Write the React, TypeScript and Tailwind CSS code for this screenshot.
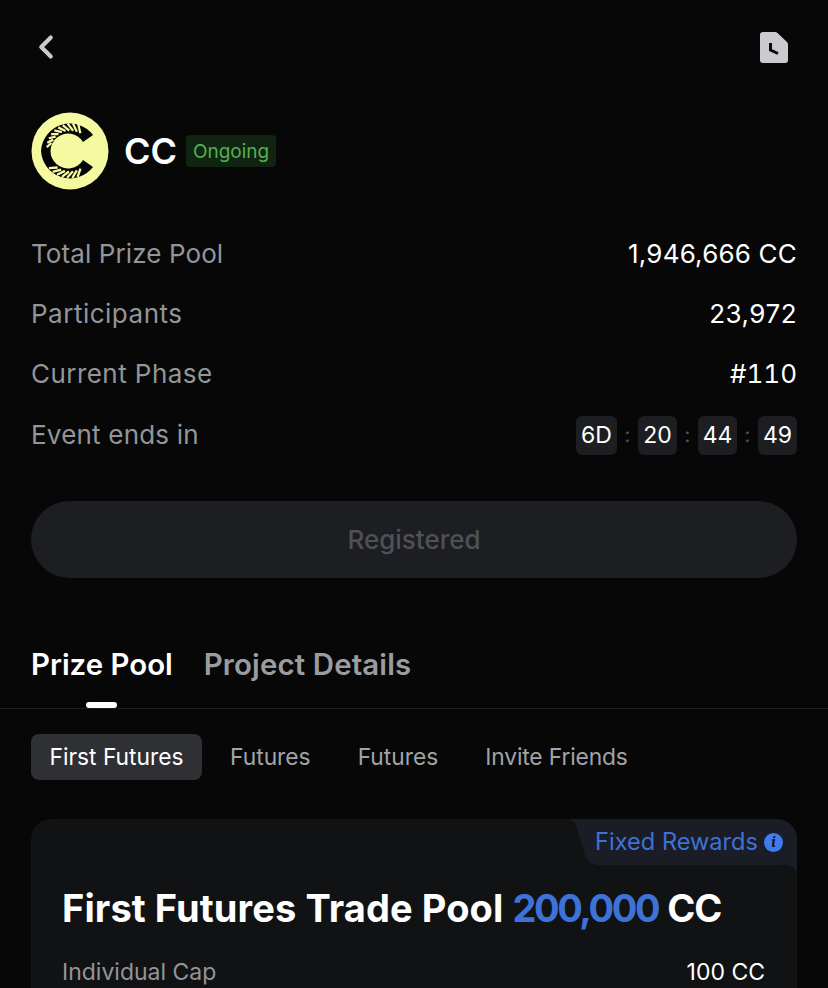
import { ChevronLeft } from 'lucide-react';

const stats = [
  { label: 'Total Prize Pool', value: '1,946,666 CC', track: 'tracking-[0.1px]', valueClass: 'tracking-[0.2px]' },
  { label: 'Participants', value: '23,972', track: 'tracking-[0.5px]', valueClass: 'tracking-[0.5px]' },
  { label: 'Current Phase', value: '#110', track: 'tracking-[0.45px]', valueClass: 'tabular-nums' },
];

const topAngles = [202, 213, 224, 235, 246, 257, 268, 279, 290, 301];
const bottomAngles = [60, 71, 82, 93, 104, 115, 126];

// stripes on the C are short skewed spokes, bent a little along the arc
function stripe(a: number, skew: number, r1: number, r2: number) {
  const rad = (d: number) => (d * Math.PI) / 180;
  return {
    x1: 39 + r1 * Math.cos(rad(a)),
    y1: 38.5 + r1 * Math.sin(rad(a)),
    x2: 39 + r2 * Math.cos(rad(a + skew)),
    y2: 38.5 + r2 * Math.sin(rad(a + skew)),
  };
}

function CcLogo() {
  return (
    <svg width="78" height="78" viewBox="0 0 78 78" className="shrink-0">
      <circle cx="39" cy="39" r="38.5" fill="#f5f9a0" />
      <path
        d="M62 23 A 29 29 0 0 0 10 38.5 A 29 29 0 0 0 62 55 L 52 48 A 17.5 17.5 0 1 1 52 30 Z"
        fill="#050505"
      />
      {topAngles.map((a) => (
        <line
          key={a}
          {...stripe(a, -14, 20, 23.5 + ((a - 202) / 100) * 4.5)}
          stroke="#f5f9a0"
          strokeWidth="2.3"
        />
      ))}
      {bottomAngles.map((a) => (
        <line key={a} {...stripe(a, 14, 21, 27.5)} stroke="#f5f9a0" strokeWidth="2.3" />
      ))}
    </svg>
  );
}

function HistoryIcon() {
  return (
    <svg width="28" height="31" viewBox="0 0 28 31">
      <path
        d="M3 0 H15 Q16.5 0 17.5 1 L27 10 Q28 11 28 12.5 V28 A3 3 0 0 1 25 31 H3 A3 3 0 0 1 0 28 V3 A3 3 0 0 1 3 0 Z"
        fill="#c9cbcf"
      />
      <path d="M10.5 11 V18 L18 21.5" fill="none" stroke="#0a0a0c" strokeWidth="3" />
    </svg>
  );
}

function TimeBox({ children, wide }: { children: string; wide?: boolean }) {
  return (
    <div
      className={`flex h-[39px] items-center justify-center rounded-md bg-[#1c1e22] text-[23px] tracking-normal text-white ${
        wide ? 'w-[41px]' : 'w-[39px]'
      }`}
    >
      {children}
    </div>
  );
}

function Colon() {
  return <span className="w-[21px] text-center text-[20px] text-[#55585d]">:</span>;
}

export default function App() {
  return (
    <div
      className="h-[988px] w-[828px] overflow-hidden bg-[#070708] text-white"
      style={{ fontFamily: 'Inter, "Liberation Sans", sans-serif' }}
    >
      <header className="flex h-[94px] items-center justify-between pl-[27px] pr-[40px]">
        <ChevronLeft size={38} strokeWidth={2.6} color="#c9cbcf" className="-mt-[1px]" />
        <HistoryIcon />
      </header>

      <div className="mt-[18px] flex items-center px-[31px]">
        <CcLogo />
        <h1 className="ml-[15px] text-[36px] font-semibold leading-none">CC</h1>
        <span className="ml-[9px] -mt-[1px] flex h-[32px] w-[90px] items-center justify-center rounded bg-[#112311] pt-[4px] text-[19px] text-[#52b14f]">
          Ongoing
        </span>
      </div>

      <div className="mt-[33px] px-[31px]">
        {stats.map((s) => (
          <div key={s.label} className="flex h-[60px] items-center justify-between text-[26px]">
            <span className={`text-[#939599] ${s.track}`}>{s.label}</span>
            <span className={`text-white ${s.valueClass}`}>{s.value}</span>
          </div>
        ))}
        <div className="mt-[1px] flex h-[60px] items-center justify-between text-[26px]">
          <span className="tracking-[0.2px] text-[#939599]">Event ends in</span>
          <div className="flex items-center pt-[2px]">
            <TimeBox wide>6D</TimeBox>
            <Colon />
            <TimeBox>20</TimeBox>
            <Colon />
            <TimeBox>44</TimeBox>
            <Colon />
            <TimeBox>49</TimeBox>
          </div>
        </div>
      </div>

      <div className="mx-[31px] mt-[37px] flex h-[77px] items-center justify-center rounded-full bg-[#1c1e22] text-[26px] font-medium text-[#4e5156]">
        Registered
      </div>

      <div className="relative mt-[66px] flex h-[65px] gap-[31px] border-b border-[#1c1e22] px-[31px] text-[29.4px] font-semibold leading-[41px]">
        <div className="relative">
          <span className="text-white">Prize Pool</span>
          <div className="absolute bottom-0 left-[55px] h-[6px] w-[31px] rounded-sm bg-white" />
        </div>
        <span className="tracking-[0.15px] text-[#9a9ca0]">Project Details</span>
      </div>

      <div className="mt-[25px] flex items-center px-[31px] text-[22.8px] text-[#a1a3a7]">
        <div className="flex h-[46px] w-[171px] items-center justify-center rounded-lg bg-[#2e3034] text-white">
          First Futures
        </div>
        <span className="ml-[28px]">Futures</span>
        <span className="ml-[47px]">Futures</span>
        <span className="ml-[47px] tracking-[-0.15px]">Invite Friends</span>
      </div>

      <section className="relative mx-[31px] mt-[39px] h-[300px] rounded-t-[20px] bg-[#111214] px-[32px]">
        <div className="absolute right-0 top-0 flex h-[46px] w-[228px] items-center justify-end pr-[14px]">
          <svg width="228" height="56" viewBox="0 0 228 56" className="absolute right-0 top-0">
            <path
              d="M0 0 H208 A20 20 0 0 1 228 20 V56 A12 10 0 0 0 214 46 H28 A14 14 0 0 1 16 36 L8 10 A12 12 0 0 0 0 0 Z"
              fill="#1a1c26"
            />
          </svg>
          <span className="relative text-[23.6px] text-[#3e72d8]">Fixed Rewards</span>
          <span className="relative ml-[6px] flex h-[19px] w-[19px] items-center justify-center rounded-full bg-[#3f7bf0] font-serif text-[15px] font-bold italic text-[#111214]">
            i
          </span>
        </div>

        <h2 className="-ml-[1px] pt-[65px] text-[38px] font-bold leading-[48px]">
          <span className="tracking-[0.1px]">First Futures Trade Pool</span>{' '}
          <span className="tracking-[-2.4px] text-[#3e72d8]">200,000</span>{' '}
          <span className="tracking-[-1px]">CC</span>
        </h2>

        <div className="mt-[23px] flex items-center justify-between text-[23px]">
          <span className="-ml-[1px] text-[#939599]">Individual Cap</span>
          <span className="text-white">100 CC</span>
        </div>
      </section>
    </div>
  );
}
